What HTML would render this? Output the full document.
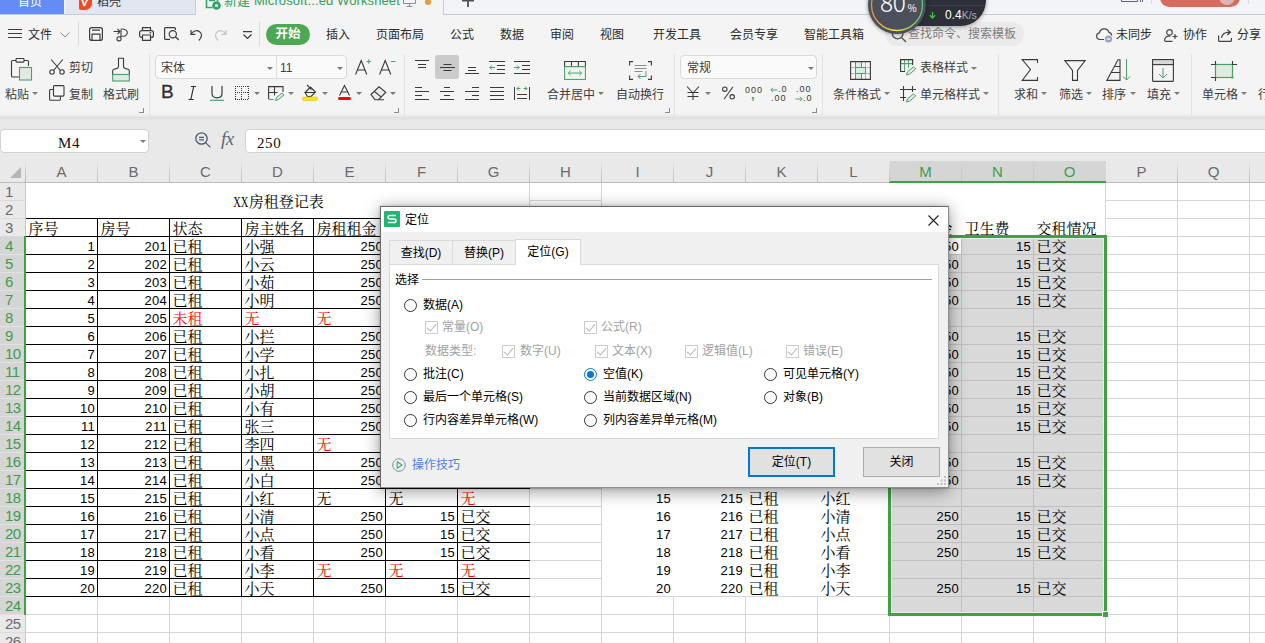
<!DOCTYPE html>
<html lang="zh-CN"><head><meta charset="utf-8"><title>WPS 定位</title>
<style>
html,body{margin:0;padding:0;}
body{width:1265px;height:643px;overflow:hidden;background:#f4f4f4;font-family:"Liberation Sans","Noto Sans CJK SC",sans-serif;font-size:12px;color:#333;}
#app{position:relative;width:1265px;height:643px;overflow:hidden;background:#f4f4f4;}
#app div,#app span,#app i,#app svg{position:absolute;box-sizing:border-box;}
#app svg{overflow:visible}
/* ---------- sheet ---------- */
#sheet{left:0;top:0;width:1265px;height:643px;}
#sheet:before{content:"";position:absolute;left:26px;top:183px;width:1239px;height:460px;background-color:#fff;
 background-image:linear-gradient(to right,#d6d6d6 1px,transparent 1px),linear-gradient(to bottom,#d6d6d6 1px,transparent 1px);
 background-size:72px 18px,72px 18px;background-position:-1px -1px, -1px -1px;}
.colhdr{left:0;top:161px;width:1265px;height:22px;background:#e9e9e9;border-bottom:1px solid #bdbdbd;}
.corner{left:0;top:0;width:26px;height:21px;}
.corner:after{content:"";position:absolute;right:0;top:0;width:1px;height:21px;background:linear-gradient(#e9e9e9,#c6c6c6 60%,#b8b8b8);}
.corner i{left:10px;top:6px;width:0;height:0;border-left:11px solid transparent;border-bottom:11px solid #b6b6b6;}
.ch{top:0;width:71px;height:21px;line-height:21px;text-align:center;font-size:15px;color:#6b6b6b;border-right:0;}
.ch:after{content:"";position:absolute;right:-1px;top:0;width:1px;height:21px;background:linear-gradient(#e9e9e9,#d0d0d0 50%,#bcbcbc);}
.ch.sel{color:#3f9c4b;}
.chselbg{top:0;height:22px;background:#d5d5d5;border-bottom:2px solid #40a044;}
.ch.sel:after{height:20px;background:linear-gradient(#d5d5d5,#c4c4c4);}
.ch.sel.last:after{display:none;}
.rowhdr{left:0;top:161px;width:26px;height:482px;z-index:3;}
.rh{left:0;width:26px;height:18px;line-height:17px;font-size:15px;color:#6b6b6b;background:#e9e9e9;border-bottom:1px solid #dadada;border-right:1px solid #c6c6c6;text-align:left;padding-left:5px;letter-spacing:-0.5px;}
.rh.sel{background:#d5d5d5;color:#3f9c4b;border-right:2px solid #40a044;border-bottom-color:#e2e2e2;}
.fill{background:#fff;}
.selarea{border:1px solid #ececec;background-color:#d9d9d9;
 background-image:linear-gradient(to right,#bfbfbf 1px,transparent 1px),linear-gradient(to bottom,#bfbfbf 1px,transparent 1px);
 background-size:72px 18px,72px 18px;background-position:-3px -3px,-3px -3px;}
.active{background:#fff;}
.cell{height:17px;width:71px;line-height:20px;font-family:"Liberation Serif","Noto Serif CJK SC",serif;font-size:15px;color:#000;white-space:nowrap;padding-left:2.5px;overflow:visible;}
.cell.num{text-align:right;padding-right:2px;padding-left:0;font-family:"Liberation Sans",sans-serif;font-size:13px;letter-spacing:.3px;line-height:20px;}
.cell.red{color:#f00;}
.cell.ctr{text-align:center;}
.t1r{width:1px;background-image:linear-gradient(to bottom,#000 1px,transparent 1px);background-size:1px 18px;}
.t1{border:1px solid #000;border-right:0;
 background-image:linear-gradient(to right,#000 1px,transparent 1px),linear-gradient(to bottom,#000 1px,transparent 1px);
 background-size:72px 18px,72px 18px;background-position:-1px -1px,-1px -1px;}
.selborder{border:3px solid #40a044;}
.selhandle{width:6px;height:6px;background:#40a044;border-left:1px solid #fff;border-top:1px solid #fff;}
/* ---------- tab bar ---------- */
#tabbar{left:0;top:0;width:1265px;height:15px;background:#f2f4f8;font-size:12px;overflow:hidden;}
#tabbar:before{content:"";position:absolute;left:0;top:14px;width:196px;height:1px;background:#c5cbda;}
#tabbar:after{content:"";position:absolute;left:444px;top:14px;width:821px;height:1px;background:#c5cbda;}
.tab-home{left:0;top:0;width:64px;height:14px;background:#648cf5;color:#fff;}
.tab-home span,.tab-dk span,.tab-doc span{white-space:nowrap;line-height:16px;}
.tab-dk{left:64px;top:0;width:132px;height:14px;background:#e2e6f0;border-left:2px solid #eef0f6;border-right:1px solid #c5cbda;}
.tab-doc{left:196px;top:0;width:248px;height:15px;background:#f4f4f4;border-right:1px solid #c5cbda;}
.doc-t{color:#2ea05a;font-size:13px;letter-spacing:.1px;}
.dot{width:6px;height:6px;border-radius:50%;background:#f0963c;}
.vsep{width:1px;background:#dcdcdc;}
.redpill{left:1160px;top:-12px;width:80px;height:19px;border-radius:10px;background:#d96b5e;}
.redpill i{left:59px;top:1px;width:16px;height:16px;border-radius:50%;background:#dcb4b6;}
/* ---------- perf widget ---------- */
#perf{left:868px;top:-25px;width:120px;height:60px;z-index:5;}
#perf .pill{left:29px;top:0;width:89px;height:51px;border-radius:0 26px 26px 0;background:#2e3039;box-shadow:0 1px 4px rgba(0,0,0,.35);}
#perf .pl{left:0;top:30px;width:88px;height:1px;background:#3b3e48;}
#perf .disc{left:0;top:1px;width:58px;height:58px;border-radius:50%;background:#4c505c;box-shadow:0 0 4px rgba(0,0,0,.45);}
#perf .pct{color:#fff;font-family:'Noto Sans CJK SC','Liberation Sans',sans-serif;font-size:24.500px;line-height:26px;letter-spacing:-.4px;font-weight:300;white-space:nowrap;}
#perf .pct em{font-style:normal;font-size:10px;margin-left:2px;font-weight:400;}
#perf .spd{color:#fff;font-size:12px;line-height:14px;white-space:nowrap;}
#perf .spd em{font-style:normal;color:#a9acb5;font-size:10.500px;}
/* ---------- menu bar ---------- */
#menubar{left:0;top:15px;width:1265px;height:36px;background:#f4f4f4;font-size:12px;}
.mi{top:12px;line-height:16px;color:#2b2b2b;white-space:nowrap;}
.start{left:266px;top:9px;width:44px;height:21px;border-radius:11px;background:#4ea753;color:#fff;text-align:center;line-height:20px;font-size:12.500px;}
.start b{position:static}
.search{left:885px;top:7px;width:139px;height:24px;border-radius:12px;background:#eaeaea;}
/* ---------- ribbon ---------- */
#ribbon{left:0;top:51px;width:1265px;height:66px;background:#f4f4f4;}
/* ---------- formula bar ---------- */
#fbar{left:0;top:117px;width:1265px;height:44px;background:#e9e9e9;}
#fbar:before{content:"";position:absolute;left:0;top:0;width:100%;height:4px;background:linear-gradient(#dedede,#e9e9e9);}
.namebox{left:0;top:12px;width:149px;height:24px;background:#fff;border:1px solid #d2d2d2;border-radius:4px;}
.finput{left:245px;top:12px;width:1040px;height:24px;background:#fff;border:1px solid #d2d2d2;border-radius:4px;}
.mono{font-family:"Liberation Serif","Noto Serif CJK SC",serif;font-size:15px;color:#111;letter-spacing:.6px;}
.dd{width:0;height:0;border-left:3px solid transparent;border-right:3px solid transparent;border-top:3px solid #7b7b7b;}
.fx{font-family:"Liberation Serif",serif;font-style:italic;font-size:19px;line-height:22px;color:#5b6a7c;letter-spacing:-.5px;}
#ribbon:after{content:"";position:absolute;left:0;bottom:0;width:100%;height:4px;background:linear-gradient(rgba(0,0,0,0),rgba(0,0,0,.06));}
.rl{font-size:12px;line-height:17px;color:#3d3d3d;white-space:nowrap;}
.rsep{top:3px;width:1px;height:61px;background:#e2e2e2;}
.lch{width:5px;height:5px;border-right:1px solid #8a8a8a;border-bottom:1px solid #8a8a8a;}
.cbox{background:#fafafa;border:1px solid #d9d9d9;border-radius:4px;}
.actv{background:#cbcbcb;border-radius:3px;}
.bi{font-size:19px;line-height:22px;color:#2e2e2e;}
.pc{font-size:17px;line-height:20px;color:#3a3a3a;}
.n0{font-size:9px;line-height:11px;color:#3a3a3a;letter-spacing:1px;white-space:nowrap;}
/* ---------- dialog ---------- */
#dlg{left:380px;top:206px;width:569px;height:282px;background:#f0f0f0;border:1px solid #6a6a6a;border-right-color:#8e8e8e;border-bottom-color:#8e8e8e;box-shadow:0 3px 16px rgba(0,0,0,.42),0 0 3px rgba(0,0,0,.2);font-size:12px;z-index:10;}
.dtitle{left:0;top:0;width:567px;height:25px;background:#fff;}
.sicon{left:3px;top:4px;width:16px;height:16px;background:#21b573;border-radius:1px;}
.dtab{top:33px;height:25px;background:#f0f0f0;border:1px solid #d9d9d9;border-bottom:0;text-align:center;}
.dtab span{position:static!important;line-height:25px;color:#000;}
.dtab.act{top:32px;height:26px;background:#fff;border-color:#d9d9d9;}
.dtab.act span{line-height:24px;}
.dpane{left:8px;top:57px;width:550px;height:175px;background:#fff;border:1px solid #d9d9d9;}
.dl{line-height:17px;color:#000;white-space:nowrap;}
.dl.dis{color:#a2a2a2;}
.hline{height:1px;background:#a0a0a0;}
.radio{width:13px;height:13px;border-radius:50%;border:1px solid #333;background:#fff;}
.radio.on{border-color:#0078d7;}
.radio.on:after{content:"";position:absolute;left:2px;top:2px;width:7px;height:7px;border-radius:50%;background:#0078d7;}
.chk{width:13px;height:13px;border:1px solid #cccccc;background:#fff;}
.chk:after{content:"";position:absolute;left:3px;top:0;width:4px;height:8px;border-right:1px solid #b5b5b5;border-bottom:1px solid #b5b5b5;transform:rotate(40deg);}
.btn{background:#e1e1e1;border:1px solid #adadad;text-align:center;}
.btn span{position:static!important;line-height:28px;color:#000;}
.btn.pri{border:2px solid #0078d7;}
.btn.pri span{line-height:26px;}
.rhsel{left:24px;width:2px;background:#40a044;}
.cell em{font-style:normal;display:inline-block;transform:scaleX(.7);margin:0 -3.300px;}

</style></head><body>
<div id="app">
<!-- ===== tab bar ===== -->
<div id="tabbar">
  <div class="tab-home"><span style="left:18px;top:-6px">首页</span></div>
  <div class="tab-dk">
    <svg style="left:13px;top:-5px" width="13" height="15" viewBox="0 0 13 15"><path d="M0 0h13v8c0 4-3 7-7 7H2c-1.100 0-2-.9-2-2z" fill="#f5481f"/><path d="M2.6 4.5c1.2 1.2 2 3.2 2.2 6M10.3 3.5c-2.6 1.4-4.2 4-4.6 7" stroke="#fff" stroke-width="1.6" fill="none" stroke-linecap="round"/></svg>
    <span style="left:31px;top:-6px;color:#333">稻壳</span>
  </div>
  <div class="tab-doc">
    <svg style="left:9px;top:-6px" width="17" height="17" viewBox="0 0 17 17"><path d="M1.5 1.5h11v6M1.5 1.5v12h6" fill="none" stroke="#2ea66b" stroke-width="1.6"/><path d="M4 6.5h6" stroke="#2ea66b" stroke-width="1.4"/><circle cx="11.5" cy="11.5" r="4.3" fill="#2ea66b"/><circle cx="11.5" cy="11.5" r="1.5" fill="#fff"/></svg>
    <span class="doc-t" style="left:28px;top:-7px">新建 Microsoft...ed Worksheet</span>
    <svg style="left:207px;top:-4px" width="13" height="12" viewBox="0 0 13 12"><path d="M.5.5h12v7H.5zM6.500 7.500v3M3.500 10.500h6" fill="none" stroke="#8b8e97" stroke-width="1"/></svg>
    <i class="dot" style="left:229px;top:-1px"></i>
  </div>
  <svg style="left:462px;top:-6px" width="12" height="13" viewBox="0 0 12 13"><path d="M0 6.500h12M6 0v13" stroke="#4e5157" stroke-width="1.800"/></svg>
  <!-- window controls (cut off) -->
  <svg style="left:1120px;top:-8px" width="24" height="12" viewBox="0 0 24 12"><path d="M1.500 0v9.500h16V0M20.500 4v6M22.500 6v4" fill="none" stroke="#5f6676" stroke-width="1"/></svg>
  <i class="vsep" style="left:1151px;top:0;height:4px"></i>
  <i class="vsep" style="left:1248px;top:0;height:4px"></i>
  <div class="redpill"><i></i></div>
</div>
<!-- ===== perf widget ===== -->
<div id="perf">
  <div class="pill"><i class="pl"></i>
    <svg style="left:32px;top:37px" width="7" height="7" viewBox="0 0 7 7"><path d="M3.500 0v6M.8 3.300l2.700 2.700 2.700-2.700" fill="none" stroke="#3dc43a" stroke-width="1.300"/></svg>
    <span class="spd" style="left:48px;top:33px">0.4<em>K/s</em></span>
  </div>
  <div class="disc">
    <svg style="left:0;top:0" width="58" height="58" viewBox="0 0 58 58">
      <defs><linearGradient id="rg" x1="0" y1="0" x2="1" y2="0"><stop offset="0" stop-color="#f28d3a"/><stop offset=".45" stop-color="#f3e04a"/><stop offset="1" stop-color="#55cf72"/></linearGradient></defs>
      <circle cx="29" cy="29" r="25.500" fill="none" stroke="url(#rg)" stroke-width="1.300"/>
    </svg>
    <span class="pct" style="left:12px;top:13px">80<em>%</em></span>
  </div>
</div>
<!-- ===== menu bar ===== -->
<div id="menubar">
  <svg style="left:8px;top:14px" width="14" height="10" viewBox="0 0 14 10"><path d="M0 .5h14M0 4.500h14M0 8.500h14" stroke="#3c3c3c" stroke-width="1.100"/></svg>
  <span class="mi" style="left:28px">文件</span>
  <svg style="left:60px;top:17px" width="10" height="6" viewBox="0 0 10 6"><path d="M.5.5L5 5 9.500.5" fill="none" stroke="#8a8a8a" stroke-width="1"/></svg>
  <i class="vsep" style="left:78px;top:7px;height:24px"></i>
  <!-- save -->
  <svg style="left:89px;top:12px" width="14" height="14" viewBox="0 0 14 14"><rect x=".6" y=".6" width="12.800" height="12.800" rx="2.200" fill="none" stroke="#3c3c3c" stroke-width="1.200"/><path d="M3 3.200h8M3 13.200V7.200h8v6" fill="none" stroke="#3c3c3c" stroke-width="1.200"/></svg>
  <!-- export/pdf -->
  <svg style="left:113px;top:13px" width="15" height="14" viewBox="0 0 15 14"><path d="M.5 3.500h6M4.500 1l2.500 2.500L4.500 6" fill="none" stroke="#3c3c3c" stroke-width="1.100"/><path d="M7.500 1.200c4.500-.8 7 1.300 6.800 3.800-.2 2.400-2.800 3.600-6.300 3.200V2" fill="none" stroke="#3c3c3c" stroke-width="1.100"/><circle cx="6" cy="10.800" r="2.100" fill="none" stroke="#3c3c3c" stroke-width="1.100"/><path d="M8 8.200l-.7 1" stroke="#3c3c3c" stroke-width="1.100"/></svg>
  <!-- print -->
  <svg style="left:139px;top:12px" width="15" height="14" viewBox="0 0 15 14"><path d="M3.500 4V.6h8V4" fill="none" stroke="#3c3c3c" stroke-width="1.200"/><rect x=".6" y="3.600" width="13.800" height="6.800" rx="2" fill="none" stroke="#3c3c3c" stroke-width="1.200"/><path d="M3.500 8h8v5.400h-8z" fill="#f4f4f4" stroke="#3c3c3c" stroke-width="1.200"/><path d="M10.500 5.800h1.800" stroke="#3c3c3c" stroke-width="1.200"/></svg>
  <!-- preview -->
  <svg style="left:164px;top:12px" width="16" height="14" viewBox="0 0 16 14"><path d="M6 12.400H1.600c-.6 0-1-.4-1-1V1.600c0-.6.400-1 1-1h8.800c.6 0 1 .4 1 1V3" fill="none" stroke="#3c3c3c" stroke-width="1.200"/><circle cx="8.800" cy="7.200" r="3.600" fill="none" stroke="#3c3c3c" stroke-width="1.200"/><path d="M11.400 9.800l3.400 3.200" stroke="#3c3c3c" stroke-width="1.200"/></svg>
  <!-- undo -->
  <svg style="left:190px;top:14px" width="13" height="12" viewBox="0 0 13 12"><path d="M1 1v4.300h4.300" fill="none" stroke="#3c3c3c" stroke-width="1.200"/><path d="M1.300 5c1.500-2.800 5.200-4.400 8.300-2.300 3 2.100 2.400 5.600-.8 8.800" fill="none" stroke="#3c3c3c" stroke-width="1.200"/></svg>
  <!-- redo (disabled) -->
  <svg style="left:214px;top:14px" width="13" height="12" viewBox="0 0 13 12"><path d="M12 1v4.300H7.700" fill="none" stroke="#c4c4c4" stroke-width="1.200"/><path d="M11.700 5C10.200 2.200 6.500.6 3.400 2.700c-3 2.100-2.400 5.600.8 8.800" fill="none" stroke="#c4c4c4" stroke-width="1.200"/></svg>
  <!-- more -->
  <svg style="left:243px;top:16px" width="9" height="9" viewBox="0 0 9 9"><path d="M0 .6h9M.5 3.500L4.500 7.500l4-4" fill="none" stroke="#3c3c3c" stroke-width="1.200"/></svg>
  <i class="vsep" style="left:259px;top:7px;height:24px"></i>
  <div class="start"><b>开始</b></div>
  <span class="mi" style="left:326px">插入</span>
  <span class="mi" style="left:376px">页面布局</span>
  <span class="mi" style="left:450px">公式</span>
  <span class="mi" style="left:500px">数据</span>
  <span class="mi" style="left:550px">审阅</span>
  <span class="mi" style="left:600px">视图</span>
  <span class="mi" style="left:653px">开发工具</span>
  <span class="mi" style="left:730px">会员专享</span>
  <span class="mi" style="left:804px">智能工具箱</span>
  <div class="search">
    <svg style="left:6px;top:5px" width="16" height="16" viewBox="0 0 14 14"><circle cx="5.800" cy="5.800" r="4.600" fill="none" stroke="#555" stroke-width="1.200"/><path d="M9.200 9.200l4 4" stroke="#555" stroke-width="1.200"/></svg>
    <span style="left:23px;top:0;line-height:24px;color:#7d7d7d">查找命令、搜索模板</span>
  </div>
  <!-- cloud -->
  <svg style="left:1096px;top:13px" width="17" height="15" viewBox="0 0 17 15"><path d="M8 11.500H4.200C2.200 11.500.6 10 .6 8.100c0-1.700 1.200-3 2.800-3.300C3.900 2.500 5.800.8 8.200.8c2.300 0 4.200 1.500 4.800 3.600 1.500.3 2.600 1.500 2.600 3" fill="none" stroke="#444" stroke-width="1.200"/><circle cx="12.500" cy="11" r="3.600" fill="#9aa3bd"/><path d="M10.700 11h3.600" stroke="#fff" stroke-width="1.300"/></svg>
  <span class="mi" style="left:1116px">未同步</span>
  <!-- person+ -->
  <svg style="left:1164px;top:14px" width="14" height="13" viewBox="0 0 14 13"><circle cx="5.500" cy="3.400" r="2.800" fill="none" stroke="#444" stroke-width="1.200"/><path d="M8.500 12.400H1.800c-.7 0-1.200-.5-1.200-1.200 0-2.200 1.800-4 4-4h1.800" fill="none" stroke="#444" stroke-width="1.200"/><path d="M8.500 7.500h5M11 5v5" stroke="#444" stroke-width="1.200"/></svg>
  <span class="mi" style="left:1183px">协作</span>
  <!-- share -->
  <svg style="left:1218px;top:14px" width="15" height="13" viewBox="0 0 15 13"><path d="M.6 6.500v4.900c0 .6.400 1 1 1h10.800c.6 0 1-.4 1-1V9" fill="none" stroke="#444" stroke-width="1.200"/><path d="M3.500 9c.5-3.500 3-5.800 8.500-5.800M9.200.6L12.400 3.200 9.200 6" fill="none" stroke="#444" stroke-width="1.200"/></svg>
  <span class="mi" style="left:1237px">分享</span>
</div>
<div id="ribbon">
<!-- paste -->
<svg style="left:10px;top:6px" width="23" height="24" viewBox="0 0 23 24"><path d="M6 3.500H2.500c-.6 0-1 .4-1 1V19c0 .6.400 1 1 1H9M14 3.500h3.500c.6 0 1 .4 1 1V9" fill="none" stroke="#3a3a3a" stroke-width="1.100"/><rect x="6" y="1.500" width="8" height="3.600" rx=".8" fill="#f4f4f4" stroke="#3a3a3a" stroke-width="1.100"/><rect x="9.500" y="10.500" width="12" height="12.500" fill="#dfeae2" stroke="#4d9f6a" stroke-width="1.100"/></svg>
<span class="rl" style="left:5px;top:36px">粘贴</span><i class="dd" style="left:32px;top:41px"></i>
<!-- cut -->
<svg style="left:49px;top:8px" width="16" height="16" viewBox="0 0 16 16"><path d="M2.200 .5l9.300 11M13.800 .5L4.500 11.500" stroke="#3a3a3a" stroke-width="1.100" fill="none"/><circle cx="3" cy="13" r="2.200" fill="none" stroke="#3a3a3a" stroke-width="1.100"/><circle cx="13" cy="13" r="2.200" fill="none" stroke="#3a3a3a" stroke-width="1.100"/></svg>
<span class="rl" style="left:69px;top:9px">剪切</span>
<!-- copy -->
<svg style="left:49px;top:34px" width="16" height="16" viewBox="0 0 16 16"><rect x="4.500" y=".6" width="10.500" height="10.500" rx="1" fill="none" stroke="#3a3a3a" stroke-width="1.100"/><path d="M4.500 4.500h-3c-.5 0-.9.400-.9.900v9c0 .5.400.9.900.9h9c.5 0 .9-.4.900-.9v-3" fill="none" stroke="#3a3a3a" stroke-width="1.100"/></svg>
<span class="rl" style="left:69px;top:36px">复制</span>
<!-- format painter -->
<svg style="left:111px;top:6px" width="20" height="25" viewBox="0 0 20 25"><path d="M7.500 1.200h5v8.300c0 1 .5 1.600 1.500 1.900l3 .8c.8.200 1.300.8 1.300 1.600v3.700H1.700v-3.700c0-.8.500-1.400 1.300-1.600l3-.8c1-.3 1.500-.9 1.500-1.900z" fill="none" stroke="#3a3a3a" stroke-width="1.100"/><rect x="1.700" y="17.500" width="16.600" height="6.500" fill="#dfeae2" stroke="#4d9f6a" stroke-width="1.100"/></svg>
<span class="rl" style="left:103px;top:36px">格式刷</span>
<i class="lch" style="left:139px;top:57px"></i>
<i class="rsep" style="left:149px"></i>
<!-- font boxes -->
<div class="cbox" style="left:155px;top:4px;width:192px;height:24px"><i style="left:120px;top:0;width:1px;height:22px;background:#dcdcdc"></i>
 <span class="rl" style="left:5px;top:4px">宋体</span><i class="dd" style="left:111px;top:11px"></i>
 <span class="rl" style="left:124px;top:4px">11</span><i class="dd" style="left:181px;top:11px"></i></div>
<!-- A+ A- -->
<svg style="left:355px;top:8px" width="17" height="16" viewBox="0 0 17 16"><path d="M.6 15.500L6.200 1.500 11.800 15.500M2.400 11h7.600" fill="none" stroke="#3a3a3a" stroke-width="1.100"/><path d="M11.500 2.500h4.500M13.750 .2v4.600" stroke="#4d9f6a" stroke-width="1"/></svg>
<svg style="left:379px;top:8px" width="17" height="16" viewBox="0 0 17 16"><path d="M.6 15.500L6.200 1.500 11.800 15.500M2.400 11h7.600" fill="none" stroke="#3a3a3a" stroke-width="1.100"/><path d="M12 2.500h4.500" stroke="#4d9f6a" stroke-width="1"/></svg>
<!-- B I U -->
<span class="bi" style="left:161px;top:30px;-webkit-text-stroke:.3px #2e2e2e">B</span>
<svg style="left:188px;top:35px" width="8.500" height="14" viewBox="0 0 9 15"><path d="M3 .6h5.500M.5 14.400H6M6 .6L3 14.400" fill="none" stroke="#2e2e2e" stroke-width="1.200"/></svg>
<svg style="left:210px;top:35px" width="14" height="15" viewBox="0 0 14 15"><path d="M2 0v7.500c0 2.600 2 4.300 5 4.300s5-1.700 5-4.300V0" fill="none" stroke="#3a3a3a" stroke-width="1.200"/><path d="M0 14.300h14" stroke="#4d9f6a" stroke-width="1.200"/></svg>
<!-- borders -->
<svg style="left:235px;top:35px" width="14" height="14" viewBox="0 0 14 14" shape-rendering="crispEdges"><path d="M0 .5h14M0 6.500h14M0 13.500h14M.5 0v14M6.500 0v14M13.500 0v14" fill="none" stroke="#3a3a3a" stroke-width="1" stroke-dasharray="1 1"/></svg>
<i class="dd" style="left:254px;top:41px"></i>
<!-- draw border -->
<svg style="left:268px;top:35px" width="17" height="16" viewBox="0 0 17 16"><path d="M.6 13V.6H15V6M.6 6.500h9M6.500 .6v9" fill="none" stroke="#3a3a3a" stroke-width="1.100"/><path d="M.6 13.500h5" stroke="#4d9f6a" stroke-width="1.100"/><path d="M7.500 14.500l1-3 5.500-4.500 2 2-5.500 4.500z" fill="#dfeae2" stroke="#4d9f6a" stroke-width="1"/></svg>
<i class="dd" style="left:288px;top:41px"></i>
<!-- fill -->
<svg style="left:302px;top:33px" width="16" height="17" viewBox="0 0 16 17"><path d="M3 8.500L8.500 3l5 5-4.500 4.500H5.500z" fill="#ececec" stroke="#3a3a3a" stroke-width="1.100"/><path d="M5 1l4.500 4.500M3 8.500h10" stroke="#3a3a3a" stroke-width="1.100" fill="none"/><rect x=".5" y="13" width="15" height="3.500" rx="1.500" fill="#f5e61c" stroke="#d8c400" stroke-width=".6"/></svg>
<i class="dd" style="left:322px;top:41px"></i>
<!-- font color -->
<svg style="left:338px;top:34px" width="13" height="16" viewBox="0 0 13 16"><path d="M1.500 10.500L6.500 .5 11.500 10.500M3.300 7h6.400" fill="none" stroke="#3a3a3a" stroke-width="1.100"/><rect x="0" y="12" width="13" height="3" rx="1.500" fill="#f00"/></svg>
<i class="dd" style="left:356px;top:41px"></i>
<!-- eraser -->
<svg style="left:370px;top:35px" width="17" height="15" viewBox="0 0 17 15"><path d="M1 8.500L9 .8l6.800 5.400-7.200 7.500H5z" fill="#ececec" stroke="#3a3a3a" stroke-width="1.100"/><path d="M4.500 5.500l6.800 5.600M8.600 13.700H14" stroke="#3a3a3a" stroke-width="1.100" fill="none"/></svg>
<i class="dd" style="left:390px;top:41px"></i>
<i class="lch" style="left:394px;top:57px"></i>
<i class="rsep" style="left:404px"></i>
<!-- alignment row 1 -->
<svg style="left:415px;top:9px" width="14" height="9" viewBox="0 0 14 9"><path d="M0 .5h14M3 4.500h8M3 7.500h8" stroke="#3a3a3a" stroke-width="1"/></svg>
<div class="actv" style="left:435px;top:4px;width:24px;height:24px"></div>
<svg style="left:440px;top:12px" width="15" height="9" viewBox="0 0 15 9"><path d="M0 4.500h15M3.500 1.500h8M3.500 7.500h8" stroke="#3a3a3a" stroke-width="1"/></svg>
<svg style="left:465px;top:15px" width="14" height="9" viewBox="0 0 14 9"><path d="M0 7.500h14M3 4.500h8M3 1.500h8" stroke="#3a3a3a" stroke-width="1"/></svg>
<svg style="left:489px;top:10px" width="16" height="14" viewBox="0 0 16 14"><path d="M0 .5h16M8 4.500h8M8 8.500h8M0 12.500h16" stroke="#3a3a3a" stroke-width="1"/><path d="M6 6.500H.8M3 4.300L.8 6.500 3 8.700" fill="none" stroke="#4d9f6a" stroke-width="1"/></svg>
<svg style="left:514px;top:10px" width="16" height="14" viewBox="0 0 16 14"><path d="M0 .5h16M8 4.500h8M8 8.500h8M0 12.500h16" stroke="#3a3a3a" stroke-width="1"/><path d="M0 6.500h5.200M3 4.300L5.200 6.500 3 8.700" fill="none" stroke="#4d9f6a" stroke-width="1"/></svg>
<!-- alignment row 2 -->
<svg style="left:415px;top:36px" width="14" height="14" viewBox="0 0 14 14"><path d="M0 .5h7M0 4.500h14M0 8.500h7M0 12.500h14" stroke="#3a3a3a" stroke-width="1"/></svg>
<svg style="left:440px;top:36px" width="14" height="14" viewBox="0 0 14 14"><path d="M4 .5h6M0 4.500h14M4 8.500h6M0 12.500h14" stroke="#3a3a3a" stroke-width="1"/></svg>
<svg style="left:465px;top:36px" width="14" height="14" viewBox="0 0 14 14"><path d="M7 .5h7M0 4.500h14M7 8.500h7M0 12.500h14" stroke="#3a3a3a" stroke-width="1"/></svg>
<svg style="left:490px;top:36px" width="14" height="14" viewBox="0 0 14 14"><path d="M0 .5h14M0 4.500h14M0 8.500h14M0 12.500h14" stroke="#3a3a3a" stroke-width="1"/></svg>
<svg style="left:514px;top:34px" width="16" height="15" viewBox="0 0 16 15"><path d="M.5 2v13M15.500 2v13M3 9.500h10M3 13.500h10" stroke="#3a3a3a" stroke-width="1"/><path d="M3 3.500h3.500M9.500 3.500H13M5 1.500L3 3.500l2 2M11 1.500l2 2-2 2" fill="none" stroke="#4d9f6a" stroke-width="1"/></svg>
<!-- merge -->
<svg style="left:564px;top:10px" width="22" height="19" viewBox="0 0 23 20" preserveAspectRatio="none"><path d="M.6 .6h21.800v5.400H.6zM7.800 .6v5.400M15 .6v5.400" fill="none" stroke="#3a3a3a" stroke-width="1.100"/><rect x=".6" y="6" width="21.800" height="13.400" fill="#eef4ef" stroke="#4d9f6a" stroke-width="1.100"/><path d="M4.500 12.700h14M7 10.200l-2.500 2.500L7 15.200M16 10.200l2.500 2.500-2.500 2.500" fill="none" stroke="#4d9f6a" stroke-width="1"/></svg>
<span class="rl" style="left:547px;top:36px">合并居中</span><i class="dd" style="left:598px;top:41px"></i>
<!-- wrap -->
<svg style="left:629px;top:10px" width="23" height="19" viewBox="0 0 23 19"><path d="M4 .6H.6V4.500M19 .6h3.400V4.500M4 18.400H.6V14.500M19 18.400h3.400V14.500" fill="none" stroke="#3a3a3a" stroke-width="1.100"/><path d="M5.500 4.500h12M5.500 7.500h12M5.500 10.500h8" stroke="#8c8c8c" stroke-width="1"/><path d="M17 10v5.500H9M11.500 13L9 15.500l2.500 2.500" fill="none" stroke="#4d9f6a" stroke-width="1"/></svg>
<span class="rl" style="left:616px;top:36px">自动换行</span>
<i class="lch" style="left:665px;top:57px"></i>
<i class="rsep" style="left:674px"></i>
<!-- number -->
<div class="cbox" style="left:680px;top:4px;width:137px;height:24px"><span class="rl" style="left:6px;top:4px">常规</span><i class="dd" style="left:127px;top:11px"></i></div>
<svg style="left:686px;top:35px" width="14" height="14" viewBox="0 0 14 14"><path d="M1 .5L7 7l6-6.500M7 7v7M1.500 6.500h11M1.500 10.500h11" fill="none" stroke="#3a3a3a" stroke-width="1.100"/></svg>
<i class="dd" style="left:705px;top:41px"></i>
<svg style="left:722px;top:35px" width="13" height="14" viewBox="0 0 13 14"><circle cx="2.800" cy="3.200" r="2.200" fill="none" stroke="#3a3a3a" stroke-width="1.100"/><circle cx="10.200" cy="10.800" r="2.200" fill="none" stroke="#3a3a3a" stroke-width="1.100"/><path d="M11 .8L2 13.200" stroke="#3a3a3a" stroke-width="1.100"/></svg>
<span class="n0" style="left:745px;top:34px">000</span><span class="n0" style="left:751px;top:36px;color:#4d9f6a;font-weight:bold;font-size:13px;line-height:15px">,</span>
<span class="n0" style="left:778px;top:33px">.0</span><span class="n0" style="left:771px;top:42px">.00</span>
<svg style="left:770px;top:36px" width="8" height="6" viewBox="0 0 8 6"><path d="M7.500 3H.8M3 .8L.8 3 3 5.200" fill="none" stroke="#4d9f6a" stroke-width="1"/></svg>
<span class="n0" style="left:796px;top:33px">.00</span><span class="n0" style="left:803px;top:42px">.0</span>
<svg style="left:795px;top:45px" width="8" height="6" viewBox="0 0 8 6"><path d="M.5 3h6.700M5 .8L7.200 3 5 5.200" fill="none" stroke="#4d9f6a" stroke-width="1"/></svg>
<i class="lch" style="left:812px;top:57px"></i>
<i class="rsep" style="left:822px"></i>
<!-- conditional format -->
<svg style="left:850px;top:10px" width="21" height="19" viewBox="0 0 21 19"><path d="M.5 6.500h20M.5 12.500h20M15.500 .5v18" fill="none" stroke="#b5b5b5" stroke-width="1"/><path d="M5.500 .5h6v6h-6zM5.500 6.500h10v6h-10zM5.500 12.500h6v6h-6z" fill="#dfeae2" stroke="#4d9f6a" stroke-width="1"/><path d="M.6 .6h19.800v17.800H.6z" fill="none" stroke="#3a3a3a" stroke-width="1.100"/></svg>
<span class="rl" style="left:833px;top:36px">条件格式</span><i class="dd" style="left:884px;top:41px"></i>
<!-- table style -->
<svg style="left:900px;top:8px" width="17" height="17" viewBox="0 0 17 17"><path d="M.6 .6h12v4H.6zM.6 4.600h12M4.600 .6v12M8.600 .6v8" fill="none" stroke="#4d9f6a" stroke-width="1"/><path d="M5 12.500H.6V.6h12V6" fill="none" stroke="#3a3a3a" stroke-width="1.100"/><path d="M6.500 16l1-3.200 6-5 2.200 2.200-6 5z" fill="#dfeae2" stroke="#4d9f6a" stroke-width="1"/></svg>
<span class="rl" style="left:920px;top:9px">表格样式</span><i class="dd" style="left:971px;top:16px"></i>
<!-- cell style -->
<svg style="left:900px;top:35px" width="17" height="17" viewBox="0 0 17 17"><path d="M3.500 0v15M0 3.500h16M0 11.500h6M12.500 0v6" fill="none" stroke="#3a3a3a" stroke-width="1.100"/><path d="M6.500 16l1-3.200 6-5 2.200 2.200-6 5z" fill="#dfeae2" stroke="#4d9f6a" stroke-width="1"/></svg>
<span class="rl" style="left:920px;top:36px">单元格样式</span><i class="dd" style="left:983px;top:41px"></i>
<i class="rsep" style="left:998px"></i>
<!-- sum -->
<svg style="left:1021px;top:8px" width="18" height="22" viewBox="0 0 18 22"><path d="M16.500 4V.6H1.200L9.500 10.500 1.200 21.400h15.300V18" fill="none" stroke="#3a3a3a" stroke-width="1.100"/></svg>
<span class="rl" style="left:1014px;top:36px">求和</span><i class="dd" style="left:1041px;top:41px"></i>
<!-- filter -->
<svg style="left:1064px;top:9px" width="22" height="21" viewBox="0 0 22 21"><path d="M.8 .6h20.400L13.500 10.500v9.900h-5v-9.900z" fill="none" stroke="#3a3a3a" stroke-width="1.100"/></svg>
<span class="rl" style="left:1059px;top:36px">筛选</span><i class="dd" style="left:1086px;top:41px"></i>
<!-- sort -->
<svg style="left:1106px;top:8px" width="25" height="23" viewBox="0 0 25 23"><path d="M.8 21.400L12 .8h2v20.600zM5 13.500h9M8.500 7.500H14" fill="none" stroke="#3a3a3a" stroke-width="1.100"/><path d="M20.500 0v21M17 17.500l3.500 3.500 3.500-3.500" fill="none" stroke="#4d9f6a" stroke-width="1"/></svg>
<span class="rl" style="left:1102px;top:36px">排序</span><i class="dd" style="left:1130px;top:41px"></i>
<!-- fill down -->
<svg style="left:1152px;top:8px" width="22" height="23" viewBox="0 0 22 23"><rect x=".6" y=".6" width="20.800" height="21.800" rx="1" fill="none" stroke="#3a3a3a" stroke-width="1.100"/><rect x=".6" y=".6" width="20.800" height="5" fill="#d8d8d8" stroke="#3a3a3a" stroke-width="1.100"/><path d="M11 9v10M7 15l4 4 4-4" fill="none" stroke="#4d9f6a" stroke-width="1"/></svg>
<span class="rl" style="left:1147px;top:36px">填充</span><i class="dd" style="left:1174px;top:41px"></i>
<i class="rsep" style="left:1191px"></i>
<!-- cell -->
<svg style="left:1211px;top:10px" width="26" height="20" viewBox="0 0 26 20"><rect x="4.500" y="3.500" width="17" height="13" fill="#dfeae2" stroke="#4d9f6a" stroke-width="1.200"/><path d="M4.500 0v3.500M4.500 16.500V20M21.500 0v3.500M0 3.500h4.500M21.500 3.500H26M0 16.500h4.500" stroke="#3a3a3a" stroke-width="1.100" fill="none"/><rect x="20.500" y="15.500" width="2" height="2" fill="#4d9f6a"/></svg>
<span class="rl" style="left:1202px;top:36px">单元格</span><i class="dd" style="left:1241px;top:41px"></i>
<span class="rl" style="left:1258px;top:36px">行</span>

</div>
<div id="fbar">
  <div class="namebox"><span style="left:0;top:2px;width:146px;text-align:center;padding-right:10px;line-height:23px" class="mono">M4</span>
    <i class="dd" style="left:139px;top:10px"></i></div>
  <svg style="left:195px;top:15px" width="17" height="17" viewBox="0 0 17 17"><circle cx="6.500" cy="6.500" r="5.700" fill="none" stroke="#4a5a6e" stroke-width="1.300"/><path d="M10.600 10.600l4.800 4.800M4 5.300h5M4 7.800h5" stroke="#4a5a6e" stroke-width="1.200"/></svg>
  <span class="fx" style="left:221px;top:11px">fx</span>
  <div class="finput"><span class="mono" style="left:11px;top:2px;line-height:23px">250</span></div>
</div>
<div id="sheet">
<div class="colhdr"><div class="corner"><i></i></div><i class="chselbg" style="left:889px;width:217px"></i><div class="ch" style="left:26px">A</div><div class="ch" style="left:98px">B</div><div class="ch" style="left:170px">C</div><div class="ch" style="left:242px">D</div><div class="ch" style="left:314px">E</div><div class="ch" style="left:386px">F</div><div class="ch" style="left:458px">G</div><div class="ch" style="left:530px">H</div><div class="ch" style="left:602px">I</div><div class="ch" style="left:674px">J</div><div class="ch" style="left:746px">K</div><div class="ch" style="left:818px">L</div><div class="ch sel" style="left:890px">M</div><div class="ch sel" style="left:962px">N</div><div class="ch sel last" style="left:1034px">O</div><div class="ch" style="left:1106px">P</div><div class="ch" style="left:1178px">Q</div><div class="ch" style="left:1250px">R</div></div>
<div class="rowhdr"><div class="rh" style="top:22px">1</div><div class="rh" style="top:40px">2</div><div class="rh" style="top:58px">3</div><div class="rh sel" style="top:76px">4</div><div class="rh sel" style="top:94px">5</div><div class="rh sel" style="top:112px">6</div><div class="rh sel" style="top:130px">7</div><div class="rh sel" style="top:148px">8</div><div class="rh sel" style="top:166px">9</div><div class="rh sel" style="top:184px">10</div><div class="rh sel" style="top:202px">11</div><div class="rh sel" style="top:220px">12</div><div class="rh sel" style="top:238px">13</div><div class="rh sel" style="top:256px">14</div><div class="rh sel" style="top:274px">15</div><div class="rh sel" style="top:292px">16</div><div class="rh sel" style="top:310px">17</div><div class="rh sel" style="top:328px">18</div><div class="rh sel" style="top:346px">19</div><div class="rh sel" style="top:364px">20</div><div class="rh sel" style="top:382px">21</div><div class="rh sel" style="top:400px">22</div><div class="rh sel" style="top:418px">23</div><div class="rh sel" style="top:436px">24</div><div class="rh" style="top:454px">25</div><div class="rh" style="top:472px">26</div><i class="rhsel" style="top:75px;height:379px"></i></div>
<div class="fill" style="left:26px;top:183px;width:503px;height:35px"></div>
<div class="fill" style="left:602px;top:183px;width:503px;height:413px"></div>
<div class="selarea" style="left:891px;top:238px;width:213px;height:375px"></div>
<div class="active" style="left:891px;top:238px;width:70px;height:16px"></div>
<div class="cell ctr" style="left:26px;top:183px;width:503px;height:35px;line-height:39px"><em>XX</em>房租登记表</div>
<div class="t1" style="left:25px;top:218px;width:504px;height:379px"></div>
<i class="t1r" style="left:529px;top:218px;height:379px"></i>
<div class="cell " style="left:26px;top:219px">序号</div><div class="cell " style="left:602px;top:219px">序号</div><div class="cell " style="left:98px;top:219px">房号</div><div class="cell " style="left:674px;top:219px">房号</div><div class="cell " style="left:170px;top:219px">状态</div><div class="cell " style="left:746px;top:219px">状态</div><div class="cell " style="left:242px;top:219px">房主姓名</div><div class="cell " style="left:818px;top:219px">房主姓名</div><div class="cell " style="left:314px;top:219px">房租租金</div><div class="cell " style="left:890px;top:219px">房租租金</div><div class="cell " style="left:386px;top:219px">卫生费</div><div class="cell " style="left:962px;top:219px">卫生费</div><div class="cell " style="left:458px;top:219px">交租情况</div><div class="cell " style="left:1034px;top:219px">交租情况</div>
<div class="cell num" style="left:26px;top:237px">1</div><div class="cell num" style="left:98px;top:237px">201</div><div class="cell num" style="left:602px;top:237px">1</div><div class="cell num" style="left:674px;top:237px">201</div><div class="cell " style="left:170px;top:237px">已租</div><div class="cell " style="left:242px;top:237px">小强</div><div class="cell " style="left:746px;top:237px">已租</div><div class="cell " style="left:818px;top:237px">小强</div><div class="cell num" style="left:314px;top:237px">250</div><div class="cell num" style="left:386px;top:237px">15</div><div class="cell " style="left:458px;top:237px">已交</div><div class="cell num" style="left:890px;top:237px">250</div><div class="cell num" style="left:962px;top:237px">15</div><div class="cell " style="left:1034px;top:237px">已交</div>
<div class="cell num" style="left:26px;top:255px">2</div><div class="cell num" style="left:98px;top:255px">202</div><div class="cell num" style="left:602px;top:255px">2</div><div class="cell num" style="left:674px;top:255px">202</div><div class="cell " style="left:170px;top:255px">已租</div><div class="cell " style="left:242px;top:255px">小云</div><div class="cell " style="left:746px;top:255px">已租</div><div class="cell " style="left:818px;top:255px">小云</div><div class="cell num" style="left:314px;top:255px">250</div><div class="cell num" style="left:386px;top:255px">15</div><div class="cell " style="left:458px;top:255px">已交</div><div class="cell num" style="left:890px;top:255px">250</div><div class="cell num" style="left:962px;top:255px">15</div><div class="cell " style="left:1034px;top:255px">已交</div>
<div class="cell num" style="left:26px;top:273px">3</div><div class="cell num" style="left:98px;top:273px">203</div><div class="cell num" style="left:602px;top:273px">3</div><div class="cell num" style="left:674px;top:273px">203</div><div class="cell " style="left:170px;top:273px">已租</div><div class="cell " style="left:242px;top:273px">小茹</div><div class="cell " style="left:746px;top:273px">已租</div><div class="cell " style="left:818px;top:273px">小茹</div><div class="cell num" style="left:314px;top:273px">250</div><div class="cell num" style="left:386px;top:273px">15</div><div class="cell " style="left:458px;top:273px">已交</div><div class="cell num" style="left:890px;top:273px">250</div><div class="cell num" style="left:962px;top:273px">15</div><div class="cell " style="left:1034px;top:273px">已交</div>
<div class="cell num" style="left:26px;top:291px">4</div><div class="cell num" style="left:98px;top:291px">204</div><div class="cell num" style="left:602px;top:291px">4</div><div class="cell num" style="left:674px;top:291px">204</div><div class="cell " style="left:170px;top:291px">已租</div><div class="cell " style="left:242px;top:291px">小明</div><div class="cell " style="left:746px;top:291px">已租</div><div class="cell " style="left:818px;top:291px">小明</div><div class="cell num" style="left:314px;top:291px">250</div><div class="cell num" style="left:386px;top:291px">15</div><div class="cell " style="left:458px;top:291px">已交</div><div class="cell num" style="left:890px;top:291px">250</div><div class="cell num" style="left:962px;top:291px">15</div><div class="cell " style="left:1034px;top:291px">已交</div>
<div class="cell num" style="left:26px;top:309px">5</div><div class="cell num" style="left:98px;top:309px">205</div><div class="cell num" style="left:602px;top:309px">5</div><div class="cell num" style="left:674px;top:309px">205</div><div class="cell red" style="left:170px;top:309px">未租</div><div class="cell red" style="left:242px;top:309px">无</div><div class="cell red" style="left:314px;top:309px">无</div><div class="cell red" style="left:386px;top:309px">无</div><div class="cell red" style="left:458px;top:309px">无</div><div class="cell " style="left:746px;top:309px">未租</div>
<div class="cell num" style="left:26px;top:327px">6</div><div class="cell num" style="left:98px;top:327px">206</div><div class="cell num" style="left:602px;top:327px">6</div><div class="cell num" style="left:674px;top:327px">206</div><div class="cell " style="left:170px;top:327px">已租</div><div class="cell " style="left:242px;top:327px">小拦</div><div class="cell " style="left:746px;top:327px">已租</div><div class="cell " style="left:818px;top:327px">小拦</div><div class="cell num" style="left:314px;top:327px">250</div><div class="cell num" style="left:386px;top:327px">15</div><div class="cell " style="left:458px;top:327px">已交</div><div class="cell num" style="left:890px;top:327px">250</div><div class="cell num" style="left:962px;top:327px">15</div><div class="cell " style="left:1034px;top:327px">已交</div>
<div class="cell num" style="left:26px;top:345px">7</div><div class="cell num" style="left:98px;top:345px">207</div><div class="cell num" style="left:602px;top:345px">7</div><div class="cell num" style="left:674px;top:345px">207</div><div class="cell " style="left:170px;top:345px">已租</div><div class="cell " style="left:242px;top:345px">小学</div><div class="cell " style="left:746px;top:345px">已租</div><div class="cell " style="left:818px;top:345px">小学</div><div class="cell num" style="left:314px;top:345px">250</div><div class="cell num" style="left:386px;top:345px">15</div><div class="cell " style="left:458px;top:345px">已交</div><div class="cell num" style="left:890px;top:345px">250</div><div class="cell num" style="left:962px;top:345px">15</div><div class="cell " style="left:1034px;top:345px">已交</div>
<div class="cell num" style="left:26px;top:363px">8</div><div class="cell num" style="left:98px;top:363px">208</div><div class="cell num" style="left:602px;top:363px">8</div><div class="cell num" style="left:674px;top:363px">208</div><div class="cell " style="left:170px;top:363px">已租</div><div class="cell " style="left:242px;top:363px">小扎</div><div class="cell " style="left:746px;top:363px">已租</div><div class="cell " style="left:818px;top:363px">小扎</div><div class="cell num" style="left:314px;top:363px">250</div><div class="cell num" style="left:386px;top:363px">15</div><div class="cell " style="left:458px;top:363px">已交</div><div class="cell num" style="left:890px;top:363px">250</div><div class="cell num" style="left:962px;top:363px">15</div><div class="cell " style="left:1034px;top:363px">已交</div>
<div class="cell num" style="left:26px;top:381px">9</div><div class="cell num" style="left:98px;top:381px">209</div><div class="cell num" style="left:602px;top:381px">9</div><div class="cell num" style="left:674px;top:381px">209</div><div class="cell " style="left:170px;top:381px">已租</div><div class="cell " style="left:242px;top:381px">小胡</div><div class="cell " style="left:746px;top:381px">已租</div><div class="cell " style="left:818px;top:381px">小胡</div><div class="cell num" style="left:314px;top:381px">250</div><div class="cell num" style="left:386px;top:381px">15</div><div class="cell " style="left:458px;top:381px">已交</div><div class="cell num" style="left:890px;top:381px">250</div><div class="cell num" style="left:962px;top:381px">15</div><div class="cell " style="left:1034px;top:381px">已交</div>
<div class="cell num" style="left:26px;top:399px">10</div><div class="cell num" style="left:98px;top:399px">210</div><div class="cell num" style="left:602px;top:399px">10</div><div class="cell num" style="left:674px;top:399px">210</div><div class="cell " style="left:170px;top:399px">已租</div><div class="cell " style="left:242px;top:399px">小有</div><div class="cell " style="left:746px;top:399px">已租</div><div class="cell " style="left:818px;top:399px">小有</div><div class="cell num" style="left:314px;top:399px">250</div><div class="cell num" style="left:386px;top:399px">15</div><div class="cell " style="left:458px;top:399px">已交</div><div class="cell num" style="left:890px;top:399px">250</div><div class="cell num" style="left:962px;top:399px">15</div><div class="cell " style="left:1034px;top:399px">已交</div>
<div class="cell num" style="left:26px;top:417px">11</div><div class="cell num" style="left:98px;top:417px">211</div><div class="cell num" style="left:602px;top:417px">11</div><div class="cell num" style="left:674px;top:417px">211</div><div class="cell " style="left:170px;top:417px">已租</div><div class="cell " style="left:242px;top:417px">张三</div><div class="cell " style="left:746px;top:417px">已租</div><div class="cell " style="left:818px;top:417px">张三</div><div class="cell num" style="left:314px;top:417px">250</div><div class="cell num" style="left:386px;top:417px">15</div><div class="cell " style="left:458px;top:417px">已交</div><div class="cell num" style="left:890px;top:417px">250</div><div class="cell num" style="left:962px;top:417px">15</div><div class="cell " style="left:1034px;top:417px">已交</div>
<div class="cell num" style="left:26px;top:435px">12</div><div class="cell num" style="left:98px;top:435px">212</div><div class="cell num" style="left:602px;top:435px">12</div><div class="cell num" style="left:674px;top:435px">212</div><div class="cell " style="left:170px;top:435px">已租</div><div class="cell " style="left:242px;top:435px">李四</div><div class="cell " style="left:746px;top:435px">已租</div><div class="cell " style="left:818px;top:435px">李四</div><div class="cell red" style="left:314px;top:435px">无</div><div class="cell red" style="left:386px;top:435px">无</div><div class="cell red" style="left:458px;top:435px">无</div>
<div class="cell num" style="left:26px;top:453px">13</div><div class="cell num" style="left:98px;top:453px">213</div><div class="cell num" style="left:602px;top:453px">13</div><div class="cell num" style="left:674px;top:453px">213</div><div class="cell " style="left:170px;top:453px">已租</div><div class="cell " style="left:242px;top:453px">小黑</div><div class="cell " style="left:746px;top:453px">已租</div><div class="cell " style="left:818px;top:453px">小黑</div><div class="cell num" style="left:314px;top:453px">250</div><div class="cell num" style="left:386px;top:453px">15</div><div class="cell " style="left:458px;top:453px">已交</div><div class="cell num" style="left:890px;top:453px">250</div><div class="cell num" style="left:962px;top:453px">15</div><div class="cell " style="left:1034px;top:453px">已交</div>
<div class="cell num" style="left:26px;top:471px">14</div><div class="cell num" style="left:98px;top:471px">214</div><div class="cell num" style="left:602px;top:471px">14</div><div class="cell num" style="left:674px;top:471px">214</div><div class="cell " style="left:170px;top:471px">已租</div><div class="cell " style="left:242px;top:471px">小白</div><div class="cell " style="left:746px;top:471px">已租</div><div class="cell " style="left:818px;top:471px">小白</div><div class="cell num" style="left:314px;top:471px">250</div><div class="cell num" style="left:386px;top:471px">15</div><div class="cell " style="left:458px;top:471px">已交</div><div class="cell num" style="left:890px;top:471px">250</div><div class="cell num" style="left:962px;top:471px">15</div><div class="cell " style="left:1034px;top:471px">已交</div>
<div class="cell num" style="left:26px;top:489px">15</div><div class="cell num" style="left:98px;top:489px">215</div><div class="cell num" style="left:602px;top:489px">15</div><div class="cell num" style="left:674px;top:489px">215</div><div class="cell " style="left:170px;top:489px">已租</div><div class="cell " style="left:242px;top:489px">小红</div><div class="cell " style="left:746px;top:489px">已租</div><div class="cell " style="left:818px;top:489px">小红</div><div class="cell " style="left:314px;top:489px">无</div><div class="cell " style="left:386px;top:489px">无</div><div class="cell red" style="left:458px;top:489px">无</div>
<div class="cell num" style="left:26px;top:507px">16</div><div class="cell num" style="left:98px;top:507px">216</div><div class="cell num" style="left:602px;top:507px">16</div><div class="cell num" style="left:674px;top:507px">216</div><div class="cell " style="left:170px;top:507px">已租</div><div class="cell " style="left:242px;top:507px">小清</div><div class="cell " style="left:746px;top:507px">已租</div><div class="cell " style="left:818px;top:507px">小清</div><div class="cell num" style="left:314px;top:507px">250</div><div class="cell num" style="left:386px;top:507px">15</div><div class="cell " style="left:458px;top:507px">已交</div><div class="cell num" style="left:890px;top:507px">250</div><div class="cell num" style="left:962px;top:507px">15</div><div class="cell " style="left:1034px;top:507px">已交</div>
<div class="cell num" style="left:26px;top:525px">17</div><div class="cell num" style="left:98px;top:525px">217</div><div class="cell num" style="left:602px;top:525px">17</div><div class="cell num" style="left:674px;top:525px">217</div><div class="cell " style="left:170px;top:525px">已租</div><div class="cell " style="left:242px;top:525px">小点</div><div class="cell " style="left:746px;top:525px">已租</div><div class="cell " style="left:818px;top:525px">小点</div><div class="cell num" style="left:314px;top:525px">250</div><div class="cell num" style="left:386px;top:525px">15</div><div class="cell " style="left:458px;top:525px">已交</div><div class="cell num" style="left:890px;top:525px">250</div><div class="cell num" style="left:962px;top:525px">15</div><div class="cell " style="left:1034px;top:525px">已交</div>
<div class="cell num" style="left:26px;top:543px">18</div><div class="cell num" style="left:98px;top:543px">218</div><div class="cell num" style="left:602px;top:543px">18</div><div class="cell num" style="left:674px;top:543px">218</div><div class="cell " style="left:170px;top:543px">已租</div><div class="cell " style="left:242px;top:543px">小看</div><div class="cell " style="left:746px;top:543px">已租</div><div class="cell " style="left:818px;top:543px">小看</div><div class="cell num" style="left:314px;top:543px">250</div><div class="cell num" style="left:386px;top:543px">15</div><div class="cell " style="left:458px;top:543px">已交</div><div class="cell num" style="left:890px;top:543px">250</div><div class="cell num" style="left:962px;top:543px">15</div><div class="cell " style="left:1034px;top:543px">已交</div>
<div class="cell num" style="left:26px;top:561px">19</div><div class="cell num" style="left:98px;top:561px">219</div><div class="cell num" style="left:602px;top:561px">19</div><div class="cell num" style="left:674px;top:561px">219</div><div class="cell " style="left:170px;top:561px">已租</div><div class="cell " style="left:242px;top:561px">小李</div><div class="cell " style="left:746px;top:561px">已租</div><div class="cell " style="left:818px;top:561px">小李</div><div class="cell red" style="left:314px;top:561px">无</div><div class="cell red" style="left:386px;top:561px">无</div><div class="cell red" style="left:458px;top:561px">无</div>
<div class="cell num" style="left:26px;top:579px">20</div><div class="cell num" style="left:98px;top:579px">220</div><div class="cell num" style="left:602px;top:579px">20</div><div class="cell num" style="left:674px;top:579px">220</div><div class="cell " style="left:170px;top:579px">已租</div><div class="cell " style="left:242px;top:579px">小天</div><div class="cell " style="left:746px;top:579px">已租</div><div class="cell " style="left:818px;top:579px">小天</div><div class="cell num" style="left:314px;top:579px">250</div><div class="cell num" style="left:386px;top:579px">15</div><div class="cell " style="left:458px;top:579px">已交</div><div class="cell num" style="left:890px;top:579px">250</div><div class="cell num" style="left:962px;top:579px">15</div><div class="cell " style="left:1034px;top:579px">已交</div>
<div class="selborder" style="left:888px;top:235px;width:219px;height:381px"></div>
<div class="selhandle" style="left:1102px;top:611px"></div>
</div>
<div id="dlg">
  <div class="dtitle">
    <div class="sicon"><svg style="left:3px;top:3px" width="10" height="10" viewBox="0 0 10 10"><path d="M9 1.500H3C1.800 1.500 1 2.200 1 3.300S1.800 5 3 5h4c1.200 0 2 .7 2 1.700S8.200 8.500 7 8.500H1" fill="none" stroke="#fff" stroke-width="1.500"/></svg></div>
    <span style="left:24px;top:5px;line-height:17px;color:#000">定位</span>
    <svg style="left:547px;top:8px" width="11" height="11" viewBox="0 0 11 11"><path d="M.5 .5l10 10M10.500 .5l-10 10" stroke="#222" stroke-width="1.100"/></svg>
  </div>
  <div class="dtab" style="left:8px;width:64px"><span>查找(D)</span></div>
  <div class="dtab" style="left:71px;width:64px"><span>替换(P)</span></div>
  <div class="dpane">
    <span class="dl" style="left:5px;top:7px">选择</span><i class="hline" style="left:32px;top:14px;width:510px"></i>
    <i class="radio" style="left:14px;top:34px"></i><span class="dl" style="left:33px;top:32px">数据(A)</span>
    <i class="chk" style="left:35px;top:56px"></i><span class="dl dis" style="left:52px;top:54px">常量(O)</span>
    <i class="chk" style="left:194px;top:56px"></i><span class="dl dis" style="left:211px;top:54px">公式(R)</span>
    <span class="dl dis" style="left:35px;top:78px">数据类型:</span>
    <i class="chk" style="left:112px;top:80px"></i><span class="dl dis" style="left:130px;top:78px">数字(U)</span>
    <i class="chk" style="left:205px;top:80px"></i><span class="dl dis" style="left:222px;top:78px">文本(X)</span>
    <i class="chk" style="left:295px;top:80px"></i><span class="dl dis" style="left:312px;top:78px">逻辑值(L)</span>
    <i class="chk" style="left:396px;top:80px"></i><span class="dl dis" style="left:413px;top:78px">错误(E)</span>
    <i class="radio" style="left:14px;top:103px"></i><span class="dl" style="left:33px;top:101px">批注(C)</span>
    <i class="radio on" style="left:194px;top:103px"></i><span class="dl" style="left:213px;top:101px">空值(K)</span>
    <i class="radio" style="left:374px;top:103px"></i><span class="dl" style="left:393px;top:101px">可见单元格(Y)</span>
    <i class="radio" style="left:14px;top:126px"></i><span class="dl" style="left:33px;top:124px">最后一个单元格(S)</span>
    <i class="radio" style="left:194px;top:126px"></i><span class="dl" style="left:213px;top:124px">当前数据区域(N)</span>
    <i class="radio" style="left:374px;top:126px"></i><span class="dl" style="left:393px;top:124px">对象(B)</span>
    <i class="radio" style="left:14px;top:149px"></i><span class="dl" style="left:33px;top:147px">行内容差异单元格(W)</span>
    <i class="radio" style="left:194px;top:149px"></i><span class="dl" style="left:213px;top:147px">列内容差异单元格(M)</span>
  </div>
  <div class="dtab act" style="left:134px;width:66px"><span>定位(G)</span></div>
  <svg style="left:11px;top:251px" width="14" height="14" viewBox="0 0 14 14"><circle cx="7" cy="7" r="6.300" fill="none" stroke="#8d8d8d" stroke-width="1"/><path d="M5.200 3.800v6.400L10 7z" fill="none" stroke="#2fb36c" stroke-width="1.100" stroke-linejoin="round"/></svg>
  <span class="dl" style="left:31px;top:250px;color:#4a82e4">操作技巧</span>
  <div class="btn pri" style="left:367px;top:240px;width:87px;height:30px"><span>定位(T)</span></div>
  <div class="btn" style="left:482px;top:240px;width:77px;height:30px"><span>关闭</span></div>
  <svg style="left:555px;top:268px" width="11" height="11" viewBox="0 0 11 11"><path d="M8 1h2v2H8zM8 4.500h2v2H8zM8 8h2v2H8zM4.500 4.500h2v2h-2zM4.500 8h2v2h-2zM1 8h2v2H1z" fill="#c2c2c2"/></svg>
</div>
</div>
</body></html>
